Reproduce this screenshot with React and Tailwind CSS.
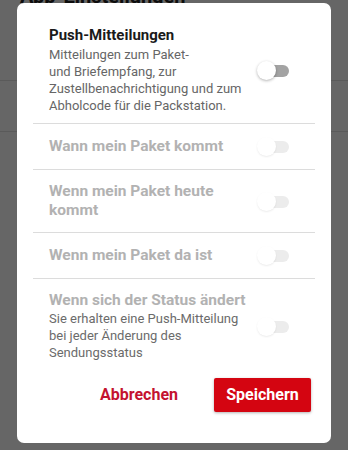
import React from 'react';

const font = { fontFamily: 'Roboto, "Noto Sans", sans-serif' };

function Toggle({ on = false, disabled = false }) {
  return (
    <div className="relative w-[32px] h-[19px] shrink-0">
      <div
        className={`absolute left-[4px] top-[4px] w-[28px] h-[12px] rounded-full ${
          disabled ? 'bg-[#ececec]' : 'bg-[#a3a3a3]'
        }`}
      />
      <div
        className={`absolute left-0 top-0 w-[19px] h-[19px] rounded-full bg-white ${
          disabled ? 'shadow-[0_1px_2px_rgba(0,0,0,0.08)]' : 'shadow-[0_1px_3px_rgba(0,0,0,0.3)]'
        } ${on ? 'translate-x-[13px]' : ''}`}
      />
    </div>
  );
}

function Row({ title, children, disabled = true, py = 'py-[13px]' }) {
  return (
    <div className={`flex items-center pl-4 pr-[26px] ${py}`}>
      <div className="flex-1 pr-[3px]">
        <div className={`text-[15.5px] leading-[19px] font-bold ${disabled ? 'text-[#b2b2b2]' : 'text-[#1a1a1a]'}`}>
          {title}
        </div>
        {children}
      </div>
      <Toggle disabled={disabled} />
    </div>
  );
}

export default function App() {
  return (
    <div className="relative w-[348px] h-[450px] overflow-hidden bg-white" style={font}>
      {/* page behind the dialog */}
      <div className="text-[#222]">
        <div className="px-5 -mt-[14px] text-[20px] leading-[20px] font-bold">App-Einstellungen</div>
        <div className="mt-[18px]">
          <div className="h-[57px] border-b border-[#e0e0e0]" />
          <div className="h-[51px] border-b border-[#e0e0e0]" />
        </div>
      </div>

      {/* scrim */}
      <div className="absolute inset-0 bg-black/60" />

      {/* dialog */}
      <div className="absolute left-[17px] top-[3px] w-[314px] h-[440px] rounded-[7px] bg-white flex flex-col">
        <div className="px-4 pt-[23px]">
          <div className="flex items-center pl-4 pr-[26px] pb-[9px] border-b border-[#dcdcdc]">
            <div className="flex-1 pr-[3px]">
              <div className="text-[15px] leading-[19px] font-bold text-[#1a1a1a]">Push-Mitteilungen</div>
              <div className="text-[13px] leading-[17px] text-[#666] mt-[1px]">
                Mitteilungen zum Paket-
                <br />
                und Briefempfang, zur Zustellbenachrichtigung und zum Abholcode für die Packstation.
              </div>
            </div>
            <Toggle />
          </div>

          <div className="border-b border-[#dcdcdc]">
            <Row title="Wann mein Paket kommt" />
          </div>
          <div className="border-b border-[#dcdcdc]">
            <Row title={<>Wenn mein Paket heute<br />kommt</>} py="py-[12px]" />
          </div>
          <div className="border-b border-[#dcdcdc]">
            <Row title="Wenn mein Paket da ist" />
          </div>
          <Row title="Wenn sich der Status ändert" py="pt-[12px] pb-[4px]">
            <div className="text-[13px] leading-[17px] text-[#6b6b6b]">
              Sie erhalten eine Push-Mitteilung
              <br />
              bei jeder Änderung des Sendungsstatus
            </div>
          </Row>
        </div>

        <div className="flex items-center justify-end gap-[36px] pr-[20px] mt-[13px]">
          <button className="text-[16px] font-bold text-[#c4122f]">Abbrechen</button>
          <button className="w-[97px] h-[34px] rounded-[2px] bg-[#d40511] text-white text-[16px] font-bold shadow-[0_1px_3px_rgba(0,0,0,0.3)]">
            Speichern
          </button>
        </div>
      </div>
    </div>
  );
}
